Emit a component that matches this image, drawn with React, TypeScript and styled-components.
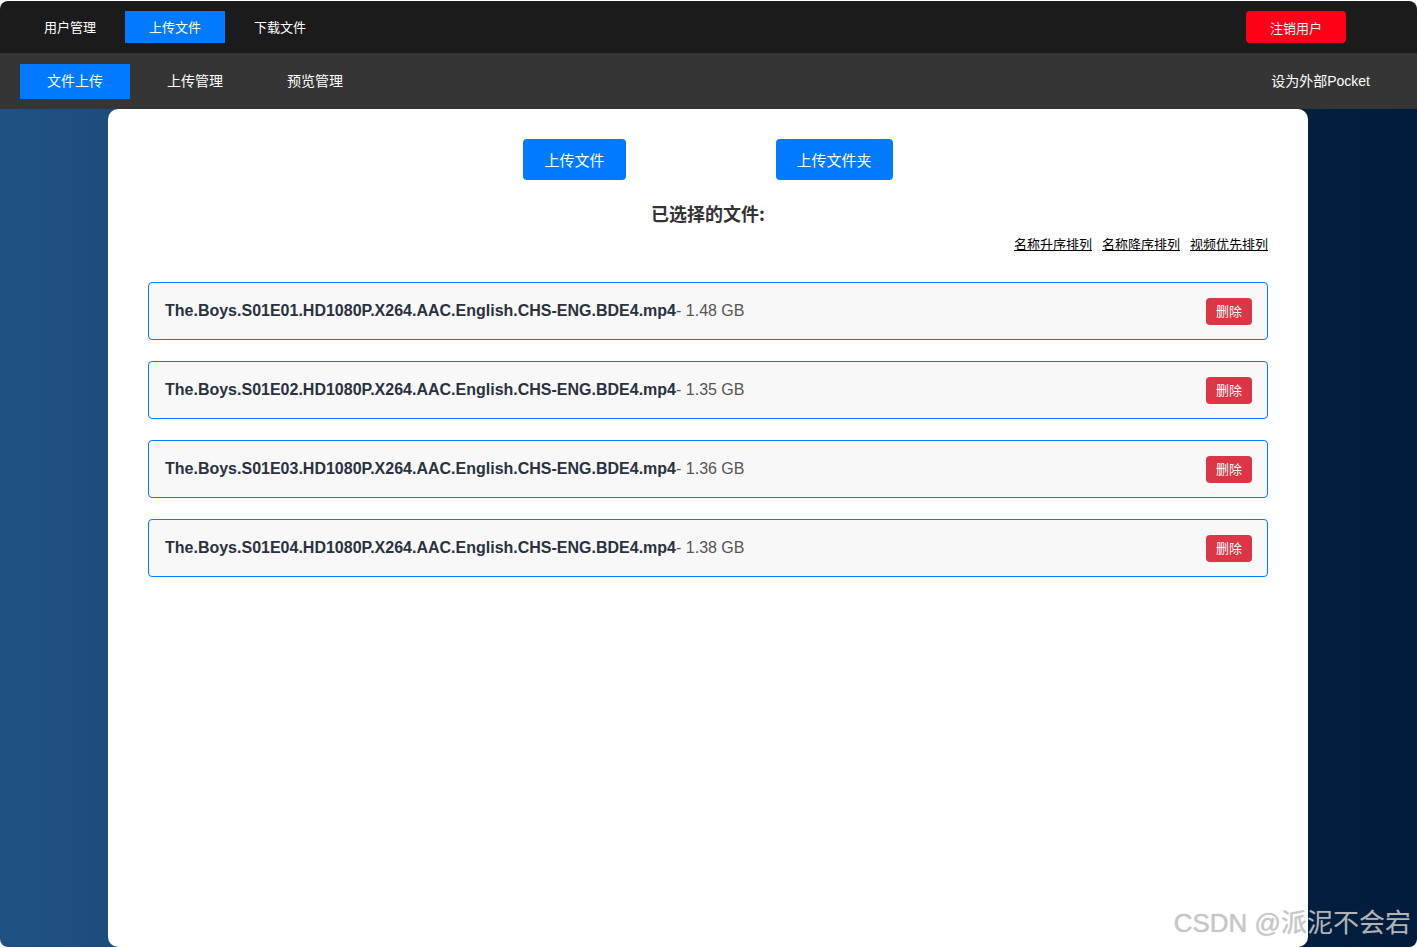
import React from 'react';
import styled, { createGlobalStyle } from 'styled-components';

const GlobalStyle = createGlobalStyle`
  html, body {
    margin: 0;
    padding: 0;
    background: #fff;
  }
  body {
    font-family: "Liberation Sans", Arial, "Noto Sans CJK SC", sans-serif;
  }
  * { box-sizing: border-box; }
`;

interface FileItem {
  name: string;
  size: string;
}

const files: FileItem[] = [
  { name: 'The.Boys.S01E01.HD1080P.X264.AAC.English.CHS-ENG.BDE4.mp4', size: '1.48 GB' },
  { name: 'The.Boys.S01E02.HD1080P.X264.AAC.English.CHS-ENG.BDE4.mp4', size: '1.35 GB' },
  { name: 'The.Boys.S01E03.HD1080P.X264.AAC.English.CHS-ENG.BDE4.mp4', size: '1.36 GB' },
  { name: 'The.Boys.S01E04.HD1080P.X264.AAC.English.CHS-ENG.BDE4.mp4', size: '1.38 GB' },
];

const Shell = styled.div`
  position: relative;
  margin-top: 1px;
  height: 946px;
  display: flex;
  flex-direction: column;
  border-radius: 8px;
  overflow: hidden;
`;

const TopBar = styled.header`
  height: 52px;
  flex-shrink: 0;
  background: #1b1b1b;
  display: flex;
  align-items: center;
  padding: 0 71px 0 20px;
`;

const TopMenu = styled.nav`
  display: flex;
  gap: 5px;
  flex: 1;
`;

const TopItem = styled.button<{ $active?: boolean }>`
  height: 32px;
  padding: 0 24px 1px;
  border: none;
  border-radius: 0;
  background: ${(p) => (p.$active ? '#007bff' : 'transparent')};
  color: #fff;
  font-family: "Noto Sans CJK SC", sans-serif;
  font-size: 13px;
  cursor: pointer;
`;

const LogoutButton = styled.button`
  width: 100px;
  height: 32px;
  padding-bottom: 1px;
  border: none;
  border-radius: 4px;
  background: #ff0019;
  color: #fff;
  font-family: "Noto Sans CJK SC", sans-serif;
  font-size: 13px;
  cursor: pointer;
`;

const SubBar = styled.div`
  height: 56px;
  flex-shrink: 0;
  background: #353535;
  display: flex;
  align-items: center;
  padding: 0 27px 0 20px;
`;

const SubMenu = styled.nav`
  display: flex;
  gap: 10px;
  flex: 1;
`;

const SubItem = styled.button<{ $active?: boolean }>`
  width: 110px;
  height: 35px;
  padding: 0 0 3px;
  border: none;
  background: ${(p) => (p.$active ? '#007bff' : 'transparent')};
  color: #fff;
  font-family: "Noto Sans CJK SC", sans-serif;
  font-size: 14px;
  cursor: pointer;
`;

const PocketLink = styled.button`
  border: none;
  background: transparent;
  color: #fff;
  padding: 0 20px 3px;
  font-family: "Liberation Sans", Arial, "Noto Sans CJK SC", sans-serif;
  font-size: 14px;
  cursor: pointer;
`;

const Main = styled.main`
  flex: 1;
  display: flex;
  justify-content: center;
  background: linear-gradient(to right, #1f5183, #001b3b);
`;

const Card = styled.section`
  width: 1200px;
  margin-right: 1px;
  background: #fff;
  border-radius: 10px;
  padding: 30px 40px;
  display: flex;
  flex-direction: column;
`;

const UploadRow = styled.div`
  display: flex;
  justify-content: center;
  gap: 150px;
`;

const UploadButton = styled.button`
  height: 41px;
  padding: 0 21px;
  border: none;
  border-radius: 4px;
  background: #007bff;
  color: #fff;
  font-family: "Noto Sans CJK SC", sans-serif;
  font-size: 15px;
  cursor: pointer;
`;

const Heading = styled.h3`
  margin: 20px 0 0;
  text-align: center;
  font-family: "Noto Sans CJK SC", sans-serif;
  font-size: 18px;
  font-weight: 700;
  color: #333;
  line-height: 27px;
`;

const SortRow = styled.div`
  display: flex;
  justify-content: flex-end;
  gap: 10px;
  margin-top: 7px;
`;

const SortLink = styled.a`
  color: #000;
  font-family: "Noto Sans CJK SC", sans-serif;
  font-size: 13px;
  text-decoration: underline;
  cursor: pointer;
`;

const FileList = styled.ul`
  list-style: none;
  margin: 29px 0 0;
  padding: 0;
  display: flex;
  flex-direction: column;
  gap: 21px;
`;

const FileRow = styled.li`
  height: 58px;
  display: flex;
  align-items: center;
  justify-content: space-between;
  padding: 0 15px 0 16px;
  background: #f8f8f8;
  border: 1px solid #007bff;
  border-radius: 4px;
`;

const FileText = styled.span`
  font-family: "Liberation Sans", Arial, sans-serif;
  font-size: 16px;
  color: #555;
`;

const FileName = styled.strong`
  color: #2a3240;
  font-weight: 700;
`;

const DeleteButton = styled.button`
  height: 27px;
  padding: 0 10px 1px;
  border: none;
  border-radius: 4px;
  background: #dc3545;
  color: #fff;
  font-family: "Noto Sans CJK SC", sans-serif;
  font-size: 13px;
  cursor: pointer;
`;

const Watermark = styled.div`
  position: absolute;
  right: 6px;
  bottom: 8px;
  font-family: "Liberation Sans", Arial, "Noto Sans CJK SC", sans-serif;
  font-size: 26px;
  color: rgba(200, 200, 200, 0.85);
  text-shadow: 0 0 1px rgba(120, 120, 120, 0.5);
  pointer-events: none;
`;

export default function App() {
  return (
    <>
      <GlobalStyle />
      <Shell>
        <TopBar>
          <TopMenu>
            <TopItem>用户管理</TopItem>
            <TopItem $active>上传文件</TopItem>
            <TopItem>下载文件</TopItem>
          </TopMenu>
          <LogoutButton>注销用户</LogoutButton>
        </TopBar>
        <SubBar>
          <SubMenu>
            <SubItem $active>文件上传</SubItem>
            <SubItem>上传管理</SubItem>
            <SubItem>预览管理</SubItem>
          </SubMenu>
          <PocketLink>设为外部Pocket</PocketLink>
        </SubBar>
        <Main>
          <Card>
            <UploadRow>
              <UploadButton>上传文件</UploadButton>
              <UploadButton>上传文件夹</UploadButton>
            </UploadRow>
            <Heading>已选择的文件:</Heading>
            <SortRow>
              <SortLink>名称升序排列</SortLink>
              <SortLink>名称降序排列</SortLink>
              <SortLink>视频优先排列</SortLink>
            </SortRow>
            <FileList>
              {files.map((f) => (
                <FileRow key={f.name}>
                  <FileText>
                    <FileName>{f.name}</FileName>- {f.size}
                  </FileText>
                  <DeleteButton>删除</DeleteButton>
                </FileRow>
              ))}
            </FileList>
          </Card>
        </Main>
        <Watermark>CSDN @派泥不会宕</Watermark>
      </Shell>
    </>
  );
}
